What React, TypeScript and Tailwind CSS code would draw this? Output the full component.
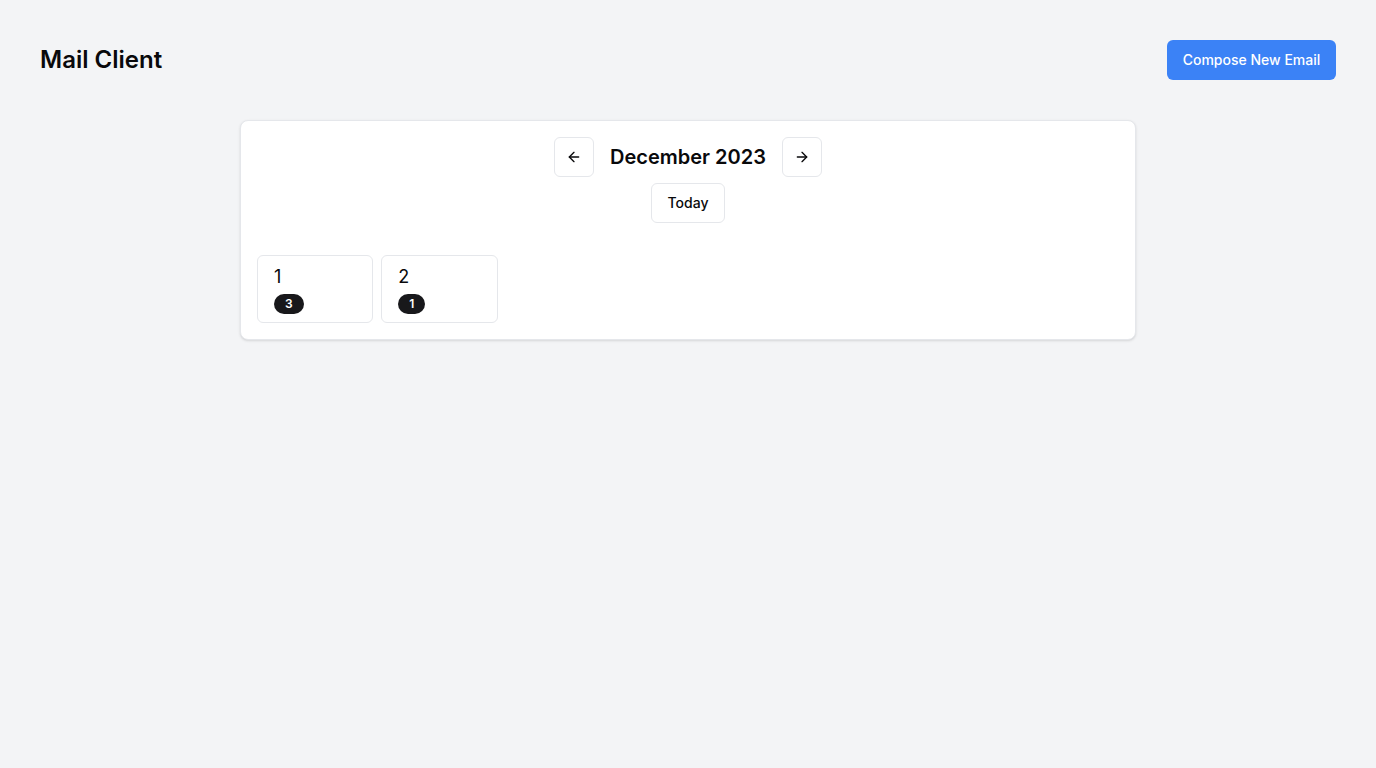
import { ArrowLeft, ArrowRight } from 'lucide-react';

const days = [
  { day: 1, count: 3 },
  { day: 2, count: 1 },
];

export default function App() {
  return (
    <div className="min-h-screen bg-[#f3f4f6] p-10 font-['Inter',sans-serif] text-[#09090b]">
      <header className="flex items-center justify-between mb-10">
        <h1 className="text-2xl font-semibold">Mail Client</h1>
        <button className="h-10 w-[169px] rounded-md bg-[#3b82f6] text-sm font-medium text-white">
          Compose New Email
        </button>
      </header>

      <div className="mx-auto max-w-4xl rounded-lg border border-[#e5e7eb] bg-white p-4 shadow-sm">
        <div className="flex flex-col items-center">
          <div className="flex items-center gap-4">
            <button className="flex h-10 w-10 items-center justify-center rounded-md border border-[#e5e7eb] bg-white">
              <ArrowLeft className="h-4 w-4" />
            </button>
            <h2 className="text-xl font-semibold">December 2023</h2>
            <button className="flex h-10 w-10 items-center justify-center rounded-md border border-[#e5e7eb] bg-white">
              <ArrowRight className="h-4 w-4" />
            </button>
          </div>
          <button className="mt-1.5 h-10 px-4 rounded-md border border-[#e5e7eb] bg-white text-sm font-medium">
            Today
          </button>
        </div>

        {/* DAYS */}
        <div className="mt-8 grid grid-cols-7 gap-2">
          {days.map((d) => (
            <div
              key={d.day}
              className="flex flex-col items-start rounded-md border border-[#e5e7eb] px-4 pt-[7px] pb-2"
            >
              <span className="text-lg leading-7">{d.day}</span>
              <span className="mt-[3px] rounded-full bg-[#18181b] px-[11px] py-0.5 text-xs font-semibold text-white">
                {d.count}
              </span>
            </div>
          ))}
        </div>
      </div>
    </div>
  );
}
